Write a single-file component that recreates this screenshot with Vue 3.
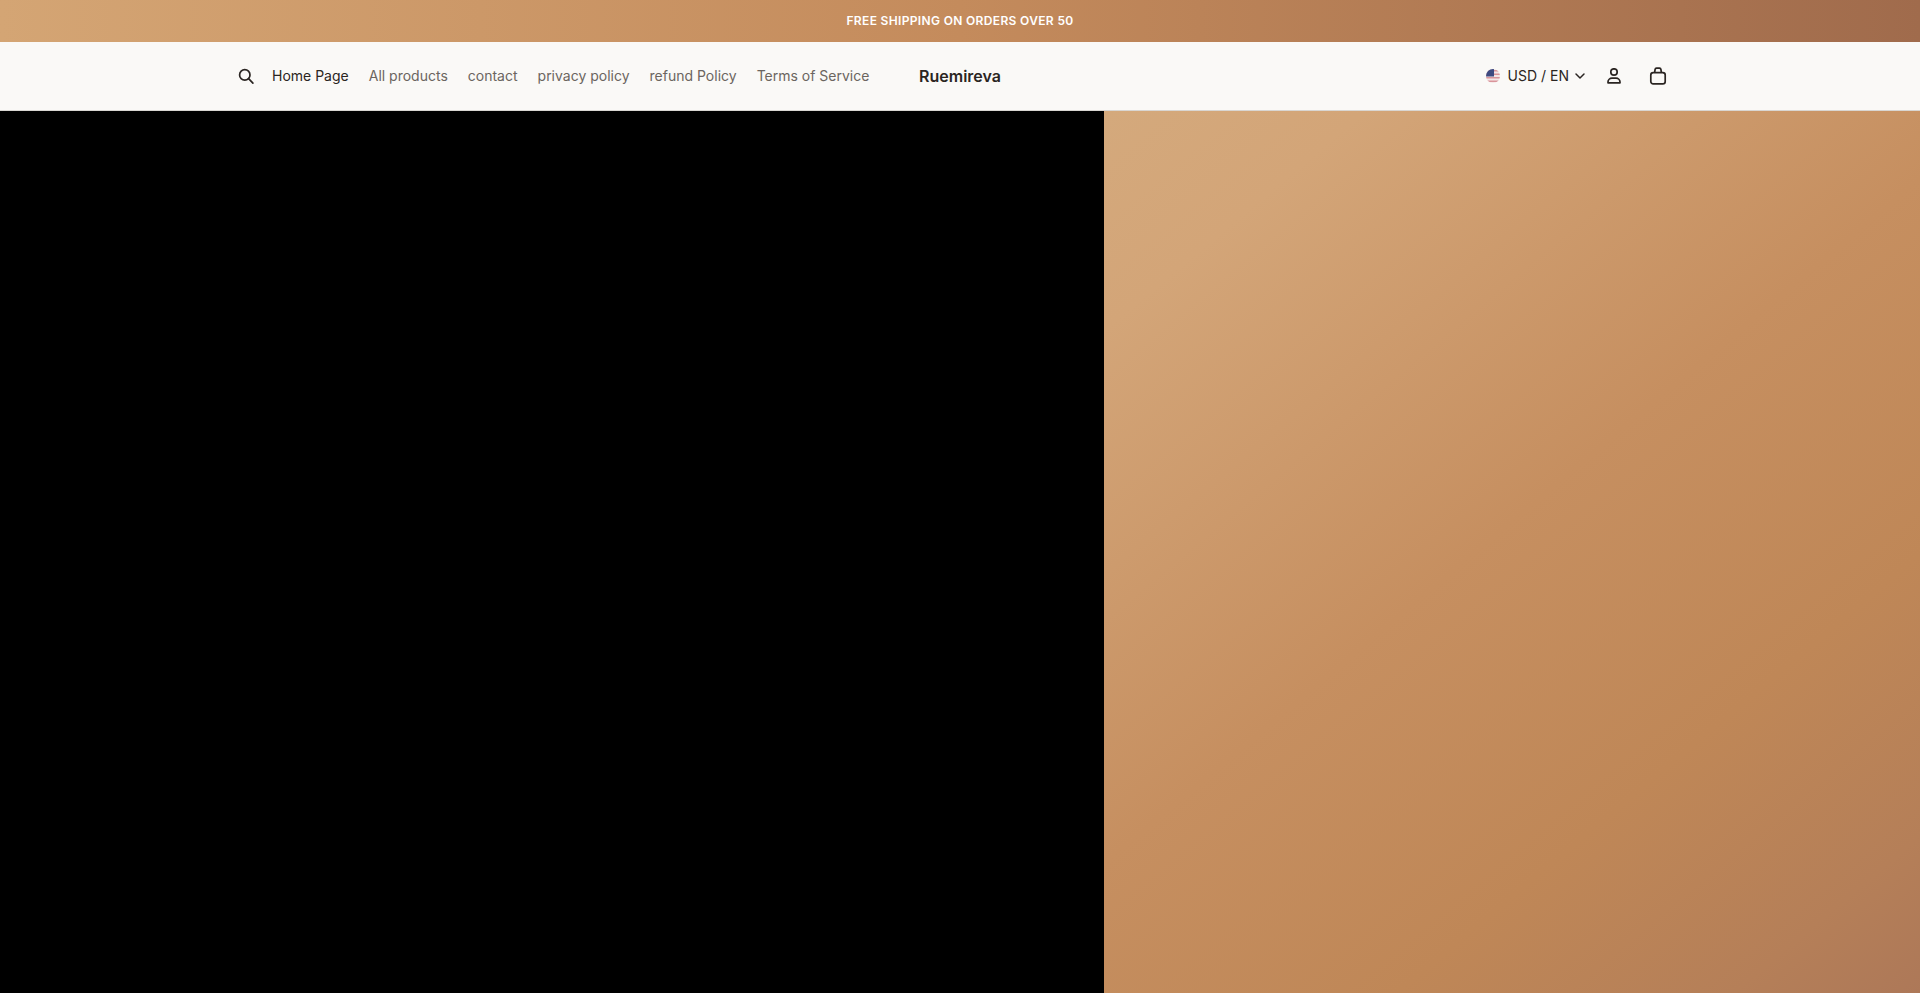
<template>
  <div class="page">
    <div class="announcement">FREE SHIPPING ON ORDERS OVER 50</div>
    <header class="header">
      <div class="header-inner">
        <nav class="left">
          <button class="icon-btn search" aria-label="Search">
            <svg width="18" height="18" viewBox="0 0 18 18" fill="none" stroke="currentColor" stroke-width="1.700" stroke-linecap="round">
              <circle cx="6.800" cy="7.900" r="5.200" />
              <path d="M10.600 11.700l4.300 4.400" />
            </svg>
          </button>
          <a v-for="(item, i) in links" :key="item" class="link" :class="{ active: i === 0 }">{{ item }}</a>
        </nav>
        <div class="logo">Ruemireva</div>
        <div class="right">
          <div class="locale">
            <svg class="flag" width="14" height="14" viewBox="0 0 14 14">
              <defs><clipPath id="flag-clip"><circle cx="7" cy="7" r="7" /></clipPath></defs>
              <g clip-path="url(#flag-clip)">
                <rect width="14" height="14" fill="#f4e6e6" />
                <rect y="1" width="14" height="1.500" fill="#d9949a" />
                <rect y="4.500" width="14" height="1.500" fill="#d9949a" />
                <rect y="8" width="14" height="1.500" fill="#d9949a" />
                <rect y="11.500" width="14" height="1.500" fill="#d9949a" />
                <rect width="8" height="7.500" fill="#3d4a80" />
              </g>
            </svg>
            <span class="locale-text">USD / EN</span>
            <svg width="12" height="12" viewBox="0 0 12 12" fill="none" stroke="currentColor" stroke-width="1.500" stroke-linecap="round" stroke-linejoin="round">
              <path d="M2 4l4 4 4-4" />
            </svg>
          </div>
          <button class="icon-btn" aria-label="Account">
            <svg width="16" height="16" viewBox="0 0 16 16" fill="none" stroke="currentColor" stroke-width="1.700" stroke-linejoin="round">
              <circle cx="8" cy="4" r="3.200" />
              <path d="M2 14.800h12V14c0-2.200-1.800-3.800-4-3.800H6c-2.200 0-4 1.600-4 3.800z" />
            </svg>
          </button>
          <button class="icon-btn" aria-label="Cart">
            <svg width="18" height="18" viewBox="0 0 18 18" fill="none" stroke="currentColor" stroke-width="1.700" stroke-linejoin="round">
              <rect x="1.800" y="5.600" width="14.400" height="11.200" rx="2.400" />
              <path d="M5.600 5.600l.5-3.200c.1-.7.7-1.200 1.400-1.200h3c.7 0 1.300.5 1.400 1.200l.5 3.200" />
            </svg>
          </button>
        </div>
      </div>
    </header>
    <main class="hero">
      <div class="hero-media"></div>
      <div class="hero-panel"></div>
    </main>
  </div>
</template>

<script setup>
const links = ['Home Page', 'All products', 'contact', 'privacy policy', 'refund Policy', 'Terms of Service']
</script>

<style>
html, body { margin: 0; overflow: hidden; }
</style>

<style scoped>
.page {
  display: flex;
  flex-direction: column;
  height: 100vh;
  font-family: Inter, "Liberation Sans", sans-serif;
}
.announcement {
  flex: none;
  height: 42px;
  box-sizing: border-box;
  padding-bottom: 2px;
  display: flex;
  align-items: center;
  justify-content: center;
  background: linear-gradient(90deg, #d4a574 0%, #c48b5c 50%, #a06b4c 100%);
  color: #fff;
  font-size: 12px;
  font-weight: 600;
  letter-spacing: 0.34px;
}
.header {
  flex: none;
  height: 68px;
  background: #faf9f7;
  border-bottom: 1px solid #d9d6d2;
}
.header-inner {
  height: 100%;
  padding: 0 238px;
  display: grid;
  grid-template-columns: 1fr auto 1fr;
  align-items: center;
}
.left {
  display: flex;
  align-items: center;
  gap: 20px;
}
.icon-btn {
  display: flex;
  align-items: center;
  justify-content: center;
  padding: 0;
  border: 0;
  background: none;
  color: #2a2522;
}
.search { margin-right: -4px; }
.link {
  padding-bottom: 2px;
  color: #6b6560;
  font-size: 14px;
  white-space: nowrap;
}
.link.active { color: #2a2522; }
.logo {
  color: #2a2522;
  font-size: 16px;
  font-weight: 600;
}
.right {
  display: flex;
  align-items: center;
  justify-content: flex-end;
  gap: 27px;
  padding-right: 15px;
}
.locale {
  display: flex;
  align-items: center;
  gap: 5px;
  margin-right: -7px;
  color: #2a2522;
  font-size: 14px;
}
.locale-text { padding-bottom: 2px; }
.flag { margin-right: 3px; }
.hero {
  flex: 1;
  min-height: 0;
  display: grid;
  grid-template-columns: 1104px 1fr;
}
.hero-media { background: #000; }
.hero-panel {
  background: linear-gradient(140deg, #d4a97c 0%, #d3a578 14%, #c68f60 48%, #bf8757 72%, #b57f58 90%, #ad7858 100%);
}
</style>
